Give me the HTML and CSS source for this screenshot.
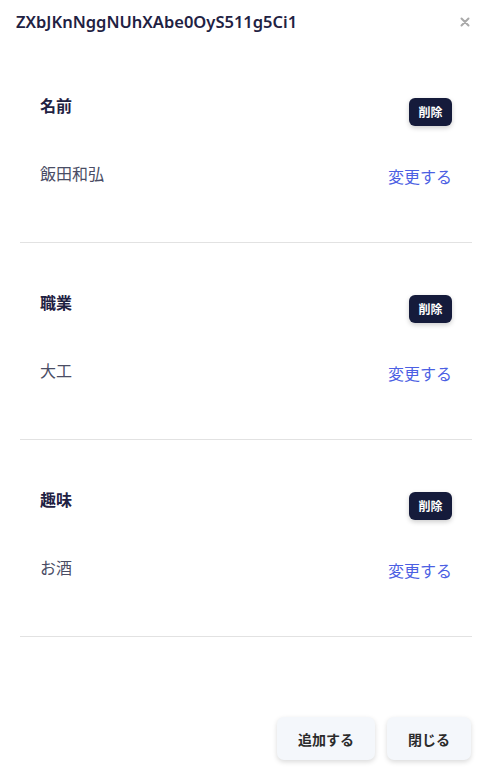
FILE: index.html
```html
<!DOCTYPE html>
<html lang="ja">
  <head>
    <meta charset="UTF-8" />
    <meta name="viewport" content="width=device-width, initial-scale=1.0" />
    <title>ユーザー情報</title>
    <link rel="stylesheet" href="styles.css">
  </head>
  <body>
    <div class="modal">
      <div class="modal-header">
        <h2 class="modal-title">ZXbJKnNggNUhXAbe0OyS511g5Ci1</h2>
        <button class="close-btn" type="button" aria-label="閉じる">
          <svg width="10" height="10" viewBox="0 0 10 10">
            <path d="M1.5 1.5 L8.5 8.5 M8.5 1.5 L1.5 8.5" stroke="#a9a9a9" stroke-width="2" stroke-linecap="round" />
          </svg>
        </button>
      </div>

      <div class="field">
        <div class="field-head">
          <h3 class="field-label">名前</h3>
          <button class="delete-btn" type="button">削除</button>
        </div>
        <div class="field-row">
          <p class="field-value">飯田和弘</p>
          <a class="edit-link" href="#">変更する</a>
        </div>
      </div>

      <div class="field">
        <div class="field-head">
          <h3 class="field-label">職業</h3>
          <button class="delete-btn" type="button">削除</button>
        </div>
        <div class="field-row">
          <p class="field-value">大工</p>
          <a class="edit-link" href="#">変更する</a>
        </div>
      </div>

      <div class="field">
        <div class="field-head">
          <h3 class="field-label">趣味</h3>
          <button class="delete-btn" type="button">削除</button>
        </div>
        <div class="field-row">
          <p class="field-value">お酒</p>
          <a class="edit-link" href="#">変更する</a>
        </div>
      </div>

      <div class="modal-footer">
        <button class="footer-btn" type="button">追加する</button>
        <button class="footer-btn" type="button">閉じる</button>
      </div>
    </div>
  </body>
</html>
```

FILE: styles.css
```css
body {
  margin: 0;
  background-color: #fff;
  font-family: "Noto Sans", "Noto Sans CJK JP", sans-serif;
  color: #1f2243;
}
.modal {
  width: 492px;
  height: 780px;
  display: flex;
  flex-direction: column;
}
.modal-header {
  height: 46px;
  padding: 0 22px 0 16px;
  display: flex;
  justify-content: space-between;
  align-items: flex-start;
}
.modal-title {
  margin: 9px 0 0;
  font-size: 16.5px;
  font-weight: 600;
  line-height: 26px;
  color: #1f2243;
}
.close-btn {
  margin-top: 17px;
  padding: 0;
  border: none;
  background: none;
  width: 10px;
  height: 10px;
  display: flex;
}
.field {
  margin: 0 20px;
  height: 148px;
  padding: 48px 20px 0;
  border-bottom: 1px solid #e2e2e2;
}
.field-head {
  display: flex;
  justify-content: space-between;
  align-items: flex-start;
}
.field-label {
  margin: 0;
  font-size: 16px;
  font-weight: 700;
  line-height: 24px;
  color: #1f2243;
}
.delete-btn {
  margin-top: 4px;
  height: 28px;
  padding: 0 9.5px;
  border: none;
  border-radius: 6px;
  background-color: #151b3b;
  color: #fff;
  font-family: inherit;
  font-size: 12px;
  font-weight: 700;
  box-shadow: 0 2px 5px rgba(0, 0, 0, 0.2);
}
.field-row {
  margin-top: 36px;
  display: flex;
  justify-content: space-between;
  align-items: flex-start;
}
.field-value {
  margin: 0;
  font-size: 16px;
  line-height: 24px;
  color: #4a4d65;
}
.edit-link {
  margin-top: 3px;
  font-size: 16px;
  line-height: 24px;
  color: #4c5fe3;
  text-decoration: none;
}
.modal-footer {
  margin-top: auto;
  padding: 0 21px 20px;
  display: flex;
  justify-content: flex-end;
  gap: 12px;
}
.footer-btn {
  height: 43px;
  padding: 0 21px;
  border: none;
  border-radius: 7px;
  background-color: #f4f7fb;
  color: #2b2b2b;
  font-family: inherit;
  font-size: 14px;
  font-weight: 700;
  box-shadow: 0 2px 5px rgba(0, 0, 0, 0.15);
}
```
